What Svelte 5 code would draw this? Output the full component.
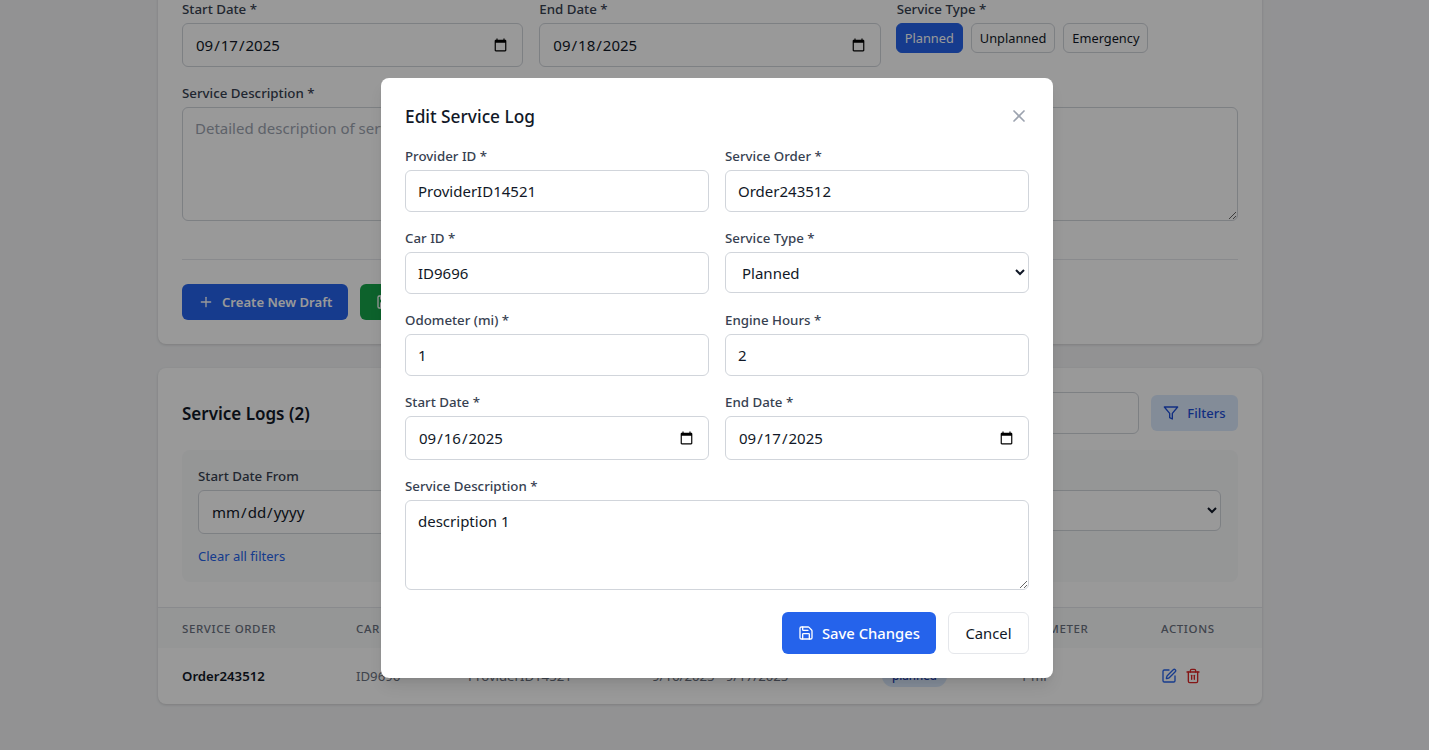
<script>
  const serviceTypes = ['Planned', 'Unplanned', 'Emergency']
  const columns = ['Service Order', 'Car ID', 'Provider', 'Dates', 'Type', 'Odometer', 'Actions']
</script>

<div class="page">
  <main class="container">
    <section class="card form-card">
      <div class="grid three">
        <div class="field">
          <label for="start">Start Date *</label>
          <input id="start" type="date" value="2025-09-17" />
        </div>
        <div class="field">
          <label for="end">End Date *</label>
          <input id="end" type="date" value="2025-09-18" />
        </div>
        <div class="field">
          <span class="label">Service Type *</span>
          <div class="chips">
            {#each serviceTypes as type, i}
              <button class="chip" class:active={i === 0}>{type}</button>
            {/each}
          </div>
        </div>
      </div>

      <div class="grid two desc-row">
        <div class="field">
          <label for="desc">Service Description *</label>
          <textarea id="desc" rows="4" placeholder="Detailed description of service..."></textarea>
        </div>
        <div class="field">
          <label for="notes">Notes</label>
          <textarea id="notes" rows="4"></textarea>
        </div>
      </div>

      <div class="form-actions">
        <button class="btn primary">
          <svg width="16" height="16" viewBox="0 0 24 24" fill="none" stroke="currentColor" stroke-width="2" stroke-linecap="round" stroke-linejoin="round">
            <path d="M5 12h14" /><path d="M12 5v14" />
          </svg>
          Create New Draft
        </button>
        <button class="btn success">
          <svg width="16" height="16" viewBox="0 0 24 24" fill="none" stroke="currentColor" stroke-width="2" stroke-linecap="round" stroke-linejoin="round">
            <path d="M15.2 3a2 2 0 0 1 1.4.6l3.8 3.8a2 2 0 0 1 .6 1.4V19a2 2 0 0 1-2 2H5a2 2 0 0 1-2-2V5a2 2 0 0 1 2-2z" />
            <path d="M17 21v-7a1 1 0 0 0-1-1H8a1 1 0 0 0-1 1v7" />
            <path d="M7 3v4a1 1 0 0 0 1 1h7" />
          </svg>
          Save Service Log
        </button>
      </div>
    </section>

    <section class="card logs-card">
      <div class="logs-head">
        <h2>Service Logs (2)</h2>
        <div class="logs-tools">
          <input class="search" type="text" />
          <button class="filters-btn">
            <svg width="16" height="16" viewBox="0 0 24 24" fill="none" stroke="currentColor" stroke-width="2" stroke-linecap="round" stroke-linejoin="round">
              <polygon points="22 3 2 3 10 12.46 10 19 14 21 14 12.46 22 3" />
            </svg>
            Filters
          </button>
        </div>
      </div>

      <div class="filter-panel">
        <div class="filter-grid">
          <div class="field">
            <label for="from">Start Date From</label>
            <input id="from" type="date" />
          </div>
          <div class="field">
            <label for="to">Start Date To</label>
            <input id="to" type="date" />
          </div>
          <div class="field">
            <label for="ftype">Service Type</label>
            <select id="ftype"><option>All Types</option></select>
          </div>
        </div>
        <a class="clear" href="#top">Clear all filters</a>
      </div>

      <table>
        <thead>
          <tr>
            {#each columns as col}
              <th>{col}</th>
            {/each}
          </tr>
        </thead>
        <tbody>
          <tr>
            <td class="order">Order243512</td>
            <td>ID9696</td>
            <td>ProviderID14521</td>
            <td>9/16/2025 - 9/17/2025</td>
            <td><span class="badge">planned</span></td>
            <td>1 mi</td>
            <td>
              <div class="row-actions">
                <svg class="edit" width="16" height="16" viewBox="0 0 24 24" fill="none" stroke="currentColor" stroke-width="2" stroke-linecap="round" stroke-linejoin="round">
                  <path d="M12 3H5a2 2 0 0 0-2 2v14a2 2 0 0 0 2 2h14a2 2 0 0 0 2-2v-7" />
                  <path d="M18.375 2.625a1 1 0 0 1 3 3l-9.013 9.014a2 2 0 0 1-.853.505l-2.873.84a.5.5 0 0 1-.62-.62l.84-2.873a2 2 0 0 1 .506-.852z" />
                </svg>
                <svg class="trash" width="16" height="16" viewBox="0 0 24 24" fill="none" stroke="currentColor" stroke-width="2" stroke-linecap="round" stroke-linejoin="round">
                  <path d="M3 6h18" />
                  <path d="M19 6v14c0 1-1 2-2 2H7c-1 0-2-1-2-2V6" />
                  <path d="M8 6V4c0-1 1-2 2-2h4c1 0 2 1 2 2v2" />
                  <line x1="10" x2="10" y1="11" y2="17" />
                  <line x1="14" x2="14" y1="11" y2="17" />
                </svg>
              </div>
            </td>
          </tr>
        </tbody>
      </table>
    </section>
  </main>

  <div class="overlay">
    <div class="modal" role="dialog" aria-labelledby="modal-title">
      <div class="modal-head">
        <h3 id="modal-title">Edit Service Log</h3>
        <button class="close" aria-label="Close">
          <svg width="20" height="20" viewBox="0 0 24 24" fill="none" stroke="currentColor" stroke-width="2" stroke-linecap="round" stroke-linejoin="round">
            <path d="M18 6 6 18" /><path d="m6 6 12 12" />
          </svg>
        </button>
      </div>

      <div class="modal-grid">
        <div class="field">
          <label for="m-provider">Provider ID *</label>
          <input id="m-provider" type="text" value="ProviderID14521" />
        </div>
        <div class="field">
          <label for="m-order">Service Order *</label>
          <input id="m-order" type="text" value="Order243512" />
        </div>
        <div class="field">
          <label for="m-car">Car ID *</label>
          <input id="m-car" type="text" value="ID9696" />
        </div>
        <div class="field">
          <label for="m-type">Service Type *</label>
          <select id="m-type">
            {#each serviceTypes as type}
              <option>{type}</option>
            {/each}
          </select>
        </div>
        <div class="field">
          <label for="m-odo">Odometer (mi) *</label>
          <input id="m-odo" type="number" value="1" />
        </div>
        <div class="field">
          <label for="m-hours">Engine Hours *</label>
          <input id="m-hours" type="number" value="2" />
        </div>
        <div class="field">
          <label for="m-start">Start Date *</label>
          <input id="m-start" type="date" value="2025-09-16" />
        </div>
        <div class="field">
          <label for="m-end">End Date *</label>
          <input id="m-end" type="date" value="2025-09-17" />
        </div>
        <div class="field wide">
          <label for="m-desc">Service Description *</label>
          <textarea id="m-desc">description 1</textarea>
        </div>
      </div>

      <div class="modal-actions">
        <button class="save">
          <svg width="16" height="16" viewBox="0 0 24 24" fill="none" stroke="currentColor" stroke-width="2" stroke-linecap="round" stroke-linejoin="round">
            <path d="M15.2 3a2 2 0 0 1 1.4.6l3.8 3.8a2 2 0 0 1 .6 1.4V19a2 2 0 0 1-2 2H5a2 2 0 0 1-2-2V5a2 2 0 0 1 2-2z" />
            <path d="M17 21v-7a1 1 0 0 0-1-1H8a1 1 0 0 0-1 1v7" />
            <path d="M7 3v4a1 1 0 0 0 1 1h7" />
          </svg>
          Save Changes
        </button>
        <button class="cancel">Cancel</button>
      </div>
    </div>
  </div>
</div>

<style>
  :global(body) {
    background: #f3f4f6;
    font-family: "Noto Sans", "Open Sans", sans-serif;
    color: #111827;
  }

  * {
    box-sizing: border-box;
  }

  .page {
    height: 750px;
    overflow: hidden;
    position: relative;
  }

  /* the page behind the dialog is scrolled, so the first card starts above the fold */
  .container {
    width: 1104px;
    margin: -41px 0 0 158px;
  }

  .card {
    background: #fff;
    border-radius: 8px;
    box-shadow: 0 1px 3px rgba(0, 0, 0, 0.15);
  }

  .form-card {
    padding: 40px 24px 24px;
    height: 385px;
  }

  .logs-card {
    margin-top: 24px;
    height: 336px;
    overflow: hidden;
  }

  .grid {
    display: grid;
    gap: 16px;
  }

  .three {
    grid-template-columns: repeat(3, 1fr);
  }

  .two {
    grid-template-columns: repeat(2, 1fr);
  }

  .desc-row {
    margin-top: 16px;
  }

  .field {
    display: flex;
    flex-direction: column;
    min-width: 0;
  }

  label,
  .label {
    font-size: 13.3px;
    font-weight: 500;
    line-height: 20px;
    color: #374151;
    margin-bottom: 4px;
  }

  input,
  select,
  textarea {
    font: inherit;
    font-size: 15px;
    color: #111827;
    background: #fff;
    border: 1px solid #d1d5db;
    border-radius: 6px;
    padding: 8px 12px;
    width: 100%;
    height: 42px;
  }

  input[type='date'] {
    height: 44px;
  }

  select {
    height: 41px;
  }

  textarea {
    height: 114px;
    display: block;
    padding-top: 10px;
  }

  textarea::placeholder {
    color: #9ca3af;
  }

  .chips {
    display: flex;
    gap: 8px;
    margin-left: -1px;
  }

  .chip {
    font: inherit;
    font-size: 12.8px;
    height: 30px;
    padding: 0 8px;
    border-radius: 6px;
    border: 1px solid #d1d5db;
    background: #fff;
    color: #111827;
  }

  .chip.active {
    background: #2563eb;
    border-color: #2563eb;
    color: #fff;
  }

  .form-actions {
    margin-top: 38px;
    padding-top: 24px;
    border-top: 1px solid #e5e7eb;
    display: flex;
    gap: 12px;
  }

  .btn {
    font: inherit;
    font-size: 13.1px;
    font-weight: 600;
    height: 36px;
    padding: 0 16px;
    border: none;
    border-radius: 6px;
    color: #fff;
    display: inline-flex;
    align-items: center;
    gap: 8px;
  }

  .primary {
    background: #2563eb;
  }

  .success {
    background: #16a34a;
  }

  .logs-head {
    display: flex;
    align-items: center;
    justify-content: space-between;
    padding: 24px 24px 16px;
  }

  h2 {
    margin: 0;
    font-size: 17px;
    font-weight: 600;
  }

  .logs-tools {
    display: flex;
    align-items: center;
    gap: 12px;
  }

  .search {
    width: 320px;
  }

  .filters-btn {
    font: inherit;
    font-size: 13px;
    font-weight: 500;
    height: 36px;
    padding: 0 12.5px;
    border: none;
    border-radius: 6px;
    background: #dbeafe;
    color: #1d4ed8;
    display: inline-flex;
    align-items: center;
    gap: 8px;
  }

  .filter-panel {
    margin: 0 24px;
    height: 132px;
    padding: 16px 17px 16px 16px;
    background: #f9fafb;
    border-radius: 8px;
  }

  .filter-grid {
    display: grid;
    grid-template-columns: repeat(3, 1fr);
    gap: 16px;
  }

  .clear {
    display: inline-block;
    margin-top: 12px;
    font-size: 13px;
    line-height: 20px;
    color: #2563eb;
    text-decoration: none;
  }

  table {
    width: 100%;
    margin-top: 25px;
    border-collapse: collapse;
    table-layout: fixed;
  }

  th:nth-child(1) { width: 198px; }
  th:nth-child(2) { width: 112px; }
  th:nth-child(3) { width: 184px; }
  th:nth-child(4) { width: 230px; }
  th:nth-child(5) { width: 138px; }
  th:nth-child(6) { width: 141px; }

  th {
    height: 40px;
    background: #f9fafb;
    border-top: 1px solid #e5e7eb;
    text-align: left;
    font-size: 11.5px;
    font-weight: 500;
    letter-spacing: 0.6px;
    text-transform: uppercase;
    color: #6b7280;
    padding: 2px 0 0;
  }

  th:first-child,
  td:first-child {
    padding-left: 24px;
  }

  td {
    height: 57px;
    padding: 0;
    font-size: 13.2px;
    color: #6b7280;
    border-bottom: 1px solid #e5e7eb;
  }

  td.order {
    font-weight: 600;
    color: #111827;
  }

  .badge {
    display: inline-block;
    padding: 0 10px;
    border-radius: 999px;
    background: #dbeafe;
    color: #1e40af;
    font-size: 11.5px;
    line-height: 22px;
    font-weight: 500;
  }

  .row-actions {
    display: flex;
    align-items: center;
    gap: 8px;
  }

  .edit {
    color: #2563eb;
  }

  .trash {
    color: #dc2626;
  }

  .overlay {
    position: absolute;
    inset: 0;
    background: rgba(0, 0, 0, 0.4);
    display: flex;
    justify-content: center;
    align-items: flex-start;
    padding: 78px 0 0 5px;
  }

  .modal {
    width: 672px;
    height: 600px;
    background: #fff;
    border-radius: 8px;
    padding: 24px;
    box-shadow: 0 10px 15px -3px rgba(0, 0, 0, 0.1), 0 4px 6px -4px rgba(0, 0, 0, 0.1);
  }

  .modal-head {
    display: flex;
    align-items: center;
    justify-content: space-between;
    height: 28px;
    margin-bottom: 16px;
  }

  h3 {
    margin: 0;
    font-size: 17.3px;
    font-weight: 500;
  }

  .close {
    border: none;
    background: none;
    padding: 0;
    color: #9ca3af;
    display: flex;
  }

  .modal-grid {
    display: grid;
    grid-template-columns: repeat(2, 1fr);
    gap: 16px;
  }

  .wide {
    grid-column: 1 / -1;
  }

  .modal textarea {
    height: 90px;
  }

  .modal-actions {
    margin-top: 22px;
    display: flex;
    justify-content: flex-end;
    gap: 12px;
  }

  .save,
  .cancel {
    font: inherit;
    font-size: 14.8px;
    height: 42px;
    border-radius: 6px;
  }

  .save {
    padding: 0 16px;
    border: none;
    background: #2563eb;
    color: #fff;
    font-weight: 500;
    display: inline-flex;
    align-items: center;
    gap: 8px;
  }

  .cancel {
    padding: 0 16.5px;
    border: 1px solid #e5e7eb;
    background: #fff;
    color: #111827;
  }
</style>
